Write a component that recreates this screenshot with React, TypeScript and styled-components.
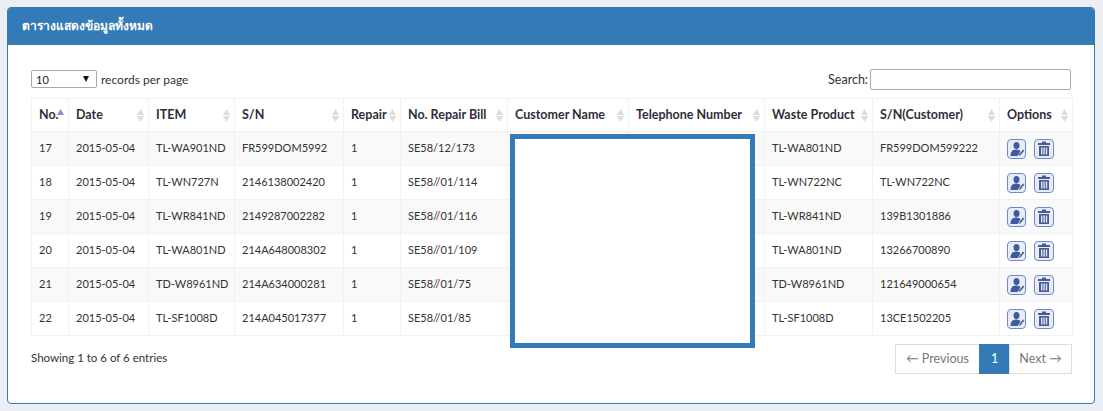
import React from "react";
import styled, { createGlobalStyle } from "styled-components";

const Global = createGlobalStyle`
  html, body { margin: 0; padding: 0; background: #ebeef3; }
  body { font-family: "Lato", "Noto Sans", sans-serif; font-size: 12px; color: #333; }
`;

const Page = styled.div`
  padding: 7px 8px 7px 7px;
  height: 411px;
  box-sizing: border-box;
`;

const Panel = styled.section`
  height: 397px;
  box-sizing: border-box;
  background: #fff;
  border: 1px solid #337ab7;
  border-radius: 4px;
  overflow: hidden;
`;

const PanelHeading = styled.h3`
  margin: 0;
  height: 37px;
  box-sizing: border-box;
  padding: 0 14px 2px;
  display: flex;
  align-items: center;
  background: #337ab7;
  color: #fff;
  font-family: "Noto Sans", "Lato", sans-serif;
  font-size: 12px;
  font-weight: 700;
`;

const PanelBody = styled.div`
  position: relative;
  padding: 23px 22px 0 23px;
`;

const TopBar = styled.div`
  display: flex;
  justify-content: space-between;
  align-items: center;
  height: 22px;
  margin-bottom: 8px;
  padding-right: 1px;
`;

const LengthLabel = styled.label`
  display: flex;
  align-items: center;
  gap: 4px;
  font-size: 12px;
  color: #333;
`;

const FakeSelect = styled.span`
  width: 66px;
  height: 18px;
  box-sizing: border-box;
  border: 1px solid #a9a9a9;
  border-radius: 2px;
  padding: 0 4px;
  display: flex;
  align-items: center;
  justify-content: space-between;
  font-size: 11px;
  color: #222;
  background: #fff;
`;

const Arrow = styled.span`
  width: 0;
  height: 0;
  margin-right: 3px;
  border-left: 3px solid transparent;
  border-right: 3px solid transparent;
  border-top: 6px solid #111;
`;

const SearchLabel = styled.label`
  display: flex;
  align-items: center;
  gap: 2px;
  font-size: 12.5px;
`;

const SearchInput = styled.input`
  width: 201px;
  height: 21px;
  box-sizing: border-box;
  border: 1px solid #a9a9a9;
  border-radius: 2px;
  padding: 0 4px;
  outline: none;
  background: #fff;
`;

const Table = styled.table`
  width: 1041px;
  table-layout: fixed;
  border-collapse: collapse;
  font-size: 11px;
`;

const Th = styled.th<{ $w: number }>`
  position: relative;
  width: ${(p) => p.$w}px;
  height: 33px;
  box-sizing: border-box;
  padding: 0 7px 2px;
  text-align: left;
  font-size: 12.5px;
  font-weight: 700;
  color: #2f2f3a;
  white-space: nowrap;
  border: 1px solid #f2f2f2;
`;

const Tr = styled.tr<{ $odd: boolean }>`
  background: ${(p) => (p.$odd ? "#f9f9f9" : "#fff")};
`;

const Td = styled.td`
  height: 34px;
  box-sizing: border-box;
  padding: 0 7px 2px;
  white-space: nowrap;
  overflow: hidden;
  color: #333;
  border: 1px solid #f2f2f2;
`;

const SortMark = styled.svg`
  position: absolute;
  right: 4px;
  top: 10px;
`;

const Actions = styled.div`
  display: flex;
  gap: 8px;
  align-items: center;
  margin-top: 2px;
`;

const IconButton = styled.span<{ $w: number }>`
  width: ${(p) => p.$w}px;
  height: 20px;
  box-sizing: border-box;
  border: 1px solid #6d88c8;
  border-radius: 4px;
  background: #e6edf8;
  display: flex;
  align-items: center;
  justify-content: center;
`;

const Redaction = styled.div`
  position: absolute;
  left: 502px;
  top: 89px;
  width: 245px;
  height: 214px;
  box-sizing: border-box;
  border: 5px solid #337ab7;
  background: #fff;
`;

const Footer = styled.div`
  display: flex;
  justify-content: space-between;
  align-items: flex-start;
  margin-top: 8px;
`;

const Info = styled.div`
  padding-top: 7px;
  font-size: 11.5px;
  color: #333;
`;

const Pager = styled.nav`
  display: flex;
  height: 30px;
  font-size: 12.5px;
`;

const PageLink = styled.span<{ $active?: boolean; $w: number }>`
  width: ${(p) => p.$w}px;
  box-sizing: border-box;
  padding-bottom: 2px;
  display: flex;
  align-items: center;
  justify-content: center;
  color: ${(p) => (p.$active ? "#fff" : "#777")};
  background: ${(p) => (p.$active ? "#337ab7" : "#fff")};
  border: 1px solid ${(p) => (p.$active ? "#337ab7" : "#ddd")};
  & + & { margin-left: -1px; }
`;

const columns: [string, number][] = [
  ["No.", 37], ["Date", 80], ["ITEM", 86], ["S/N", 109], ["Repair", 57],
  ["No. Repair Bill", 107], ["Customer Name", 121], ["Telephone Number", 136],
  ["Waste Product", 108], ["S/N(Customer)", 127], ["Options", 73],
];

const rows = [
  ["17", "2015-05-04", "TL-WA901ND", "FR599DOM5992", "1", "SE58/12/173", "TL-WA801ND", "FR599DOM599222"],
  ["18", "2015-05-04", "TL-WN727N", "2146138002420", "1", "SE58//01/114", "TL-WN722NC", "TL-WN722NC"],
  ["19", "2015-05-04", "TL-WR841ND", "2149287002282", "1", "SE58//01/116", "TL-WR841ND", "139B1301886"],
  ["20", "2015-05-04", "TL-WA801ND", "214A648008302", "1", "SE58//01/109", "TL-WA801ND", "13266700890"],
  ["21", "2015-05-04", "TD-W8961ND", "214A634000281", "1", "SE58//01/75", "TD-W8961ND", "121649000654"],
  ["22", "2015-05-04", "TL-SF1008D", "214A045017377", "1", "SE58//01/85", "TL-SF1008D", "13CE1502205"],
];

const Sort = ({ active }: { active?: boolean }) => (
  <SortMark width="7" height="13" viewBox="0 0 7 13">
    <path d="M3.5 0 L7 6 H0 Z" fill={active ? "#8a8ad8" : "#dcdcdc"} />
    {!active && <path d="M0 7 H7 L3.5 13 Z" fill="#dcdcdc" />}
  </SortMark>
);

const UserEdit = () => (
  <svg width="16" height="16" viewBox="0 0 16 16">
    <ellipse cx="7.5" cy="4.5" rx="3" ry="3.6" fill="#3f5a9f" />
    <path d="M1.5 15 C1.5 10.5 3.5 8.5 7.5 8.5 C9.5 8.5 10.8 9.2 11.4 10.4 L8.8 15 Z" fill="#3f5a9f" />
    <path d="M10 15 L10.4 13 L14 8.4 L15.4 9.5 L11.8 14 Z" fill="#5f6472" />
  </svg>
);

const Trash = () => (
  <svg width="14" height="16" viewBox="0 0 14 16">
    <rect x="5" y="0.5" width="4" height="1.5" fill="#4a5a90" />
    <rect x="1" y="2" width="12" height="2" rx="0.5" fill="#4a5a90" />
    <path d="M2 5 H12 V15 H2 Z" fill="#4a5a90" />
    <rect x="4" y="6.5" width="1.4" height="7" fill="#dfe6f4" />
    <rect x="6.4" y="6.5" width="1.4" height="7" fill="#dfe6f4" />
    <rect x="8.8" y="6.5" width="1.4" height="7" fill="#dfe6f4" />
  </svg>
);

export default function App() {
  return (
    <Page>
      <Global />
      <Panel>
        <PanelHeading>ตารางแสดงข้อมูลทั้งหมด</PanelHeading>
        <PanelBody>
          <TopBar>
            <LengthLabel>
              <FakeSelect>10<Arrow /></FakeSelect>
              records per page
            </LengthLabel>
            <SearchLabel>
              Search:
              <SearchInput aria-label="Search" />
            </SearchLabel>
          </TopBar>
          <Table>
            <thead>
              <tr>
                {columns.map(([name, w], i) => (
                  <Th key={name} $w={w}>
                    {name}
                    <Sort active={i === 0} />
                  </Th>
                ))}
              </tr>
            </thead>
            <tbody>
              {rows.map((r, i) => (
                <Tr key={r[0]} $odd={i % 2 === 0}>
                  {r.slice(0, 6).map((c, j) => <Td key={j}>{c}</Td>)}
                  <Td />
                  <Td />
                  {r.slice(6).map((c, j) => <Td key={j}>{c}</Td>)}
                  <Td>
                    <Actions>
                      <IconButton $w={19}><UserEdit /></IconButton>
                      <IconButton $w={20}><Trash /></IconButton>
                    </Actions>
                  </Td>
                </Tr>
              ))}
            </tbody>
          </Table>
          <Redaction />
          <Footer>
            <Info>Showing 1 to 6 of 6 entries</Info>
            <Pager>
              <PageLink $w={85}>← Previous</PageLink>
              <PageLink $w={31} $active>1</PageLink>
              <PageLink $w={63}>Next →</PageLink>
            </Pager>
          </Footer>
        </PanelBody>
      </Panel>
    </Page>
  );
}
